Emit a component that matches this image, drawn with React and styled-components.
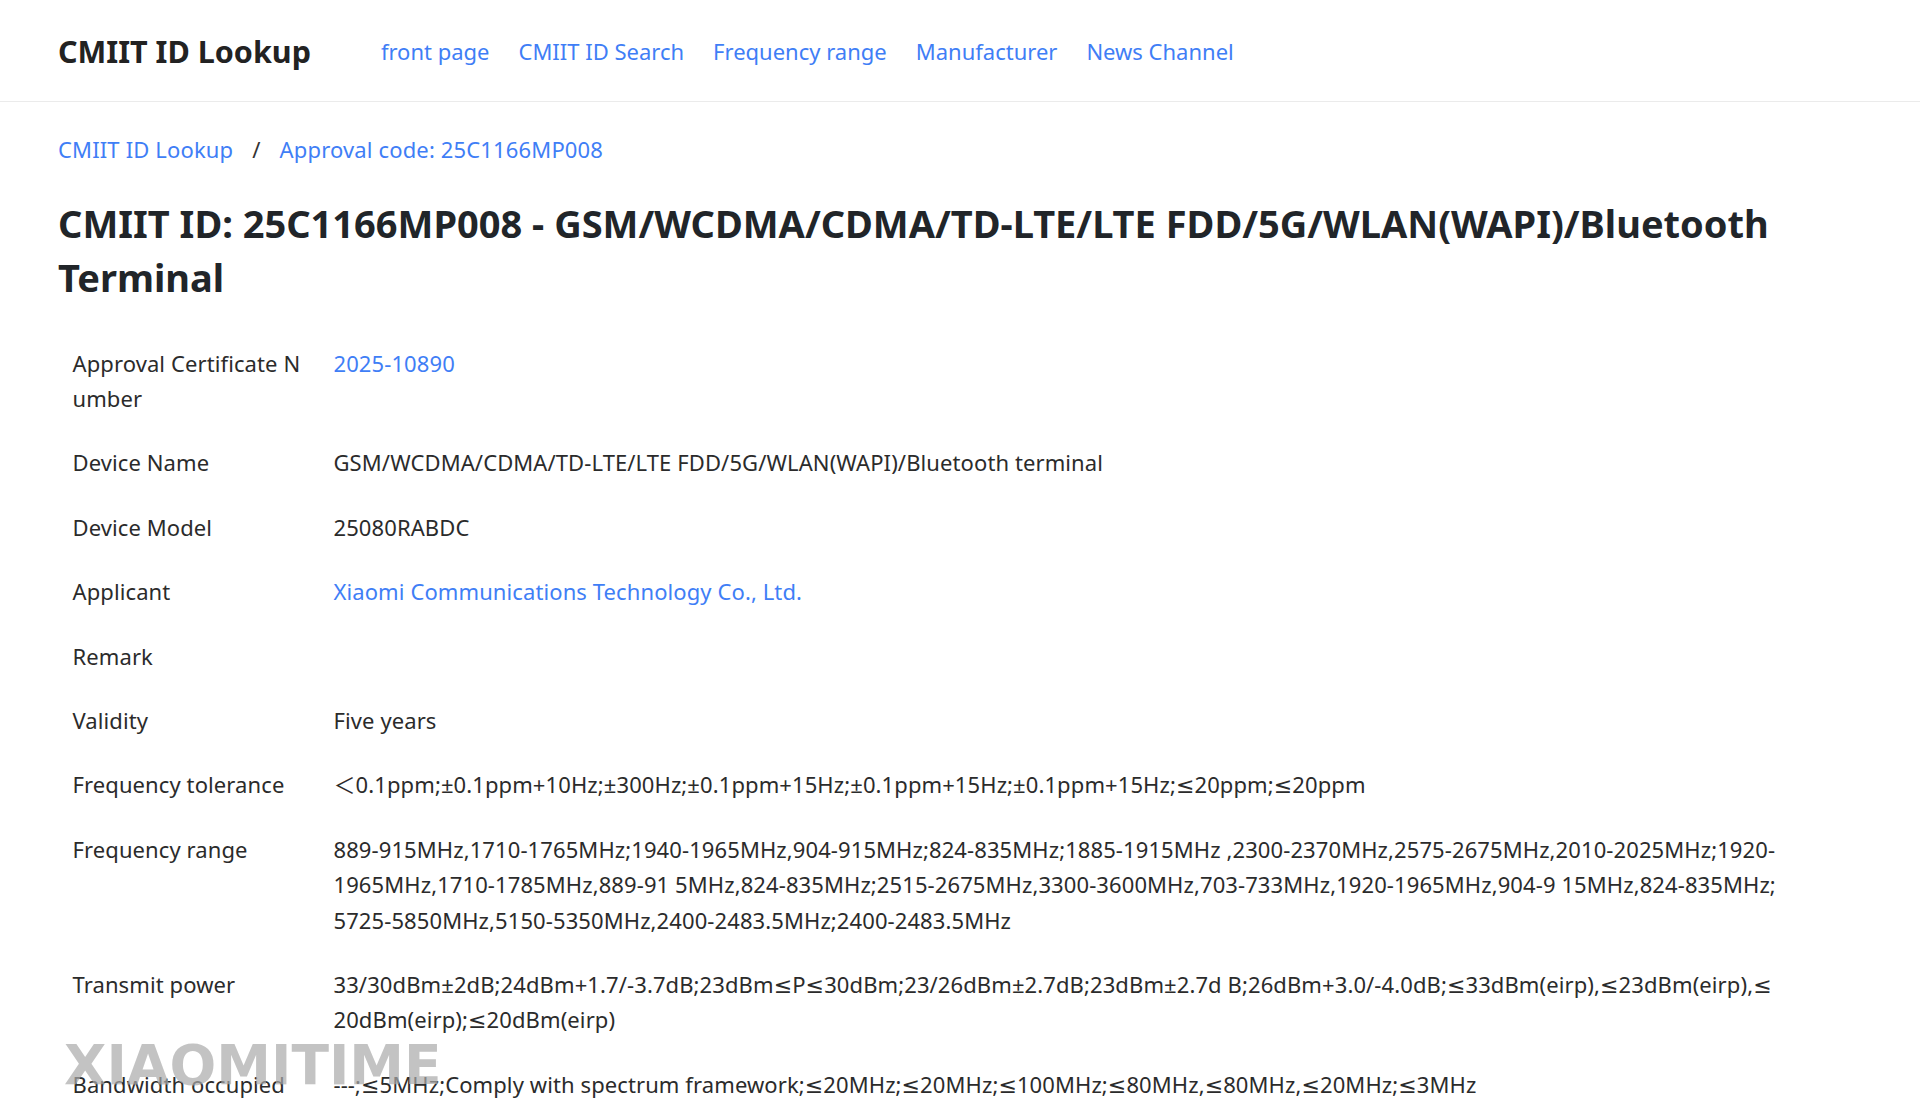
import styled, { createGlobalStyle } from "styled-components";

const GlobalStyle = createGlobalStyle`
  html, body {
    margin: 0;
    padding: 0;
    background: #fff;
  }
  body {
    font-family: "Noto Sans", "DejaVu Sans", "Noto Sans CJK SC", sans-serif;
    color: #2b2b2b;
  }
`;

const Page = styled.div`
  position: relative;
  min-height: 1108px;
`;

const Header = styled.header`
  display: flex;
  align-items: center;
  height: 101px;
  padding: 0 58px;
  border-bottom: 1px solid #ebebeb;
`;

const Logo = styled.a`
  font-size: 30.5px;
  font-weight: 700;
  color: #222;
  text-decoration: none;
  margin-right: 70px;
`;

const Nav = styled.nav`
  display: flex;
  gap: 29px;
`;

const NavLink = styled.a`
  font-size: 22px;
  color: #3f7ef6;
  text-decoration: none;
`;

const Main = styled.main`
  padding: 0 58px;
`;

const Crumbs = styled.div`
  display: flex;
  align-items: center;
  margin-top: 30px;
  font-size: 22px;
  letter-spacing: 0.15px;
  line-height: 35px;
`;

const Crumb = styled.a`
  color: #3f7ef6;
  text-decoration: none;
`;

const Sep = styled.span`
  padding: 0 19px;
  color: #333;
`;

const Title = styled.h1`
  margin: 29px 0 27px;
  font-size: 38px;
  line-height: 54px;
  font-weight: 700;
  color: #212529;
`;

const Table = styled.table`
  width: 1736px;
  border-collapse: collapse;
  font-size: 22px;
  letter-spacing: 0.1px;
  line-height: 35.4px;
`;

const Label = styled.td`
  width: 232px;
  padding: 14.5px;
  vertical-align: top;
  word-break: break-all;
`;

const Value = styled.td`
  padding: 14.5px;
  vertical-align: top;
  word-break: break-all;
  color: #2b2b2b;
`;

const ValueLink = styled.a`
  color: #3f7ef6;
  text-decoration: none;
`;

const Watermark = styled.div`
  position: absolute;
  left: 64px;
  top: 1033px;
  font-family: "DejaVu Sans", sans-serif;
  font-weight: 700;
  font-size: 55px;
  color: rgba(170, 170, 170, 0.7);
  pointer-events: none;
`;

const rows = [
  { label: "Approval Certificate Number", value: "2025-10890", link: true },
  {
    label: "Device Name",
    value: "GSM/WCDMA/CDMA/TD-LTE/LTE FDD/5G/WLAN(WAPI)/Bluetooth terminal",
  },
  { label: "Device Model", value: "25080RABDC" },
  {
    label: "Applicant",
    value: "Xiaomi Communications Technology Co., Ltd.",
    link: true,
  },
  { label: "Remark", value: "" },
  { label: "Validity", value: "Five years" },
  {
    label: "Frequency tolerance",
    value:
      "＜0.1ppm;±0.1ppm+10Hz;±300Hz;±0.1ppm+15Hz;±0.1ppm+15Hz;±0.1ppm+15Hz;≤20ppm;≤20ppm",
  },
  {
    label: "Frequency range",
    value:
      "889-915MHz,1710-1765MHz;1940-1965MHz,904-915MHz;824-835MHz;1885-1915MHz ,2300-2370MHz,2575-2675MHz,2010-2025MHz;1920-1965MHz,1710-1785MHz,889-91 5MHz,824-835MHz;2515-2675MHz,3300-3600MHz,703-733MHz,1920-1965MHz,904-9 15MHz,824-835MHz;5725-5850MHz,5150-5350MHz,2400-2483.5MHz;2400-2483.5MHz",
  },
  {
    label: "Transmit power",
    value:
      "33/30dBm±2dB;24dBm+1.7/-3.7dB;23dBm≤P≤30dBm;23/26dBm±2.7dB;23dBm±2.7d B;26dBm+3.0/-4.0dB;≤33dBm(eirp),≤23dBm(eirp),≤20dBm(eirp);≤20dBm(eirp)",
  },
  {
    label: "Bandwidth occupied",
    value:
      "---;≤5MHz;Comply with spectrum framework;≤20MHz;≤20MHz;≤100MHz;≤80MHz,≤80MHz,≤20MHz;≤3MHz",
  },
];

const navItems = [
  "front page",
  "CMIIT ID Search",
  "Frequency range",
  "Manufacturer",
  "News Channel",
];

export default function App() {
  return (
    <Page>
      <GlobalStyle />
      <Header>
        <Logo href="#">CMIIT ID Lookup</Logo>
        <Nav>
          {navItems.map((item) => (
            <NavLink key={item} href="#">
              {item}
            </NavLink>
          ))}
        </Nav>
      </Header>
      <Main>
        <Crumbs>
          <Crumb href="#">CMIIT ID Lookup</Crumb>
          <Sep>/</Sep>
          <Crumb href="#">Approval code: 25C1166MP008</Crumb>
        </Crumbs>
        <Title>
          CMIIT ID: 25C1166MP008 - GSM/WCDMA/CDMA/TD-LTE/LTE
          FDD/5G/WLAN(WAPI)/Bluetooth Terminal
        </Title>
        <Table>
          <tbody>
            {rows.map((row) => (
              <tr key={row.label}>
                <Label>{row.label}</Label>
                <Value>
                  {row.link ? (
                    <ValueLink href="#">{row.value}</ValueLink>
                  ) : (
                    row.value
                  )}
                </Value>
              </tr>
            ))}
          </tbody>
        </Table>
      </Main>
      <Watermark>XIAOMITIME</Watermark>
    </Page>
  );
}
